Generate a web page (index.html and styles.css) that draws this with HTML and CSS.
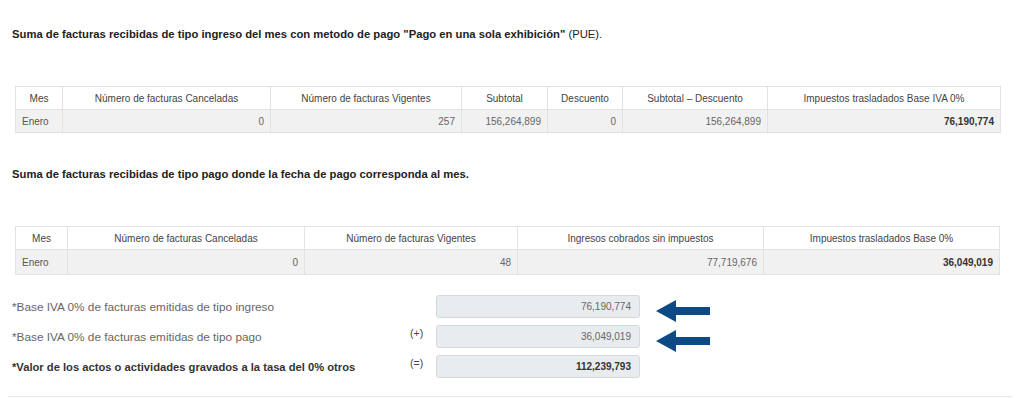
FILE: index.html
```html
<!DOCTYPE html>
<html lang="es">
<head>
<meta charset="utf-8">
<link rel="stylesheet" href="styles.css">
</head>
<body>
<div class="page">
  <p class="title t1">Suma de facturas recibidas de tipo ingreso del mes con metodo de pago "Pago en una sola exhibición" <span class="normal">(PUE).</span></p>
  <table class="grid g1">
    <colgroup>
      <col class="c1-mes"><col class="c1-can"><col class="c1-vig"><col class="c1-sub"><col class="c1-des"><col class="c1-sd"><col class="c1-imp">
    </colgroup>
    <thead>
      <tr><th>Mes</th><th>Número de facturas Canceladas</th><th>Número de facturas Vigentes</th><th>Subtotal</th><th>Descuento</th><th>Subtotal – Descuento</th><th>Impuestos trasladados Base IVA 0%</th></tr>
    </thead>
    <tbody>
      <tr><td class="left">Enero</td><td>0</td><td>257</td><td>156,264,899</td><td>0</td><td>156,264,899</td><td class="strong">76,190,774</td></tr>
    </tbody>
  </table>

  <p class="title t2">Suma de facturas recibidas de tipo pago donde la fecha de pago corresponda al mes.</p>
  <table class="grid g2">
    <colgroup>
      <col class="c2-mes"><col class="c2-can"><col class="c2-vig"><col class="c2-ing"><col class="c2-imp">
    </colgroup>
    <thead>
      <tr><th>Mes</th><th>Número de facturas Canceladas</th><th>Número de facturas Vigentes</th><th>Ingresos cobrados sin impuestos</th><th>Impuestos trasladados Base 0%</th></tr>
    </thead>
    <tbody>
      <tr><td class="left">Enero</td><td>0</td><td>48</td><td>77,719,676</td><td class="strong">36,049,019</td></tr>
    </tbody>
  </table>

  <div class="sums">
    <div class="row">
      <span class="label">*Base IVA 0% de facturas emitidas de tipo ingreso</span>
      <span class="sign"></span>
      <span class="field">76,190,774</span>
      <svg class="arrow" width="54" height="22" viewBox="0 0 54 22"><polygon points="0,11 20,0 20,7 54,7 54,15 20,15 20,22" fill="#0d4a85"/></svg>
    </div>
    <div class="row">
      <span class="label">*Base IVA 0% de facturas emitidas de tipo pago</span>
      <span class="sign">(+)</span>
      <span class="field">36,049,019</span>
      <svg class="arrow" width="54" height="22" viewBox="0 0 54 22"><polygon points="0,11 20,0 20,7 54,7 54,15 20,15 20,22" fill="#0d4a85"/></svg>
    </div>
    <div class="row">
      <span class="label bold">*Valor de los actos o actividades gravados a la tasa del 0% otros</span>
      <span class="sign">(=)</span>
      <span class="field bold">112,239,793</span>
    </div>
  </div>
  <div class="rule"></div>
</div>
</body>
</html>
```

FILE: styles.css
```css
html, body {
  margin: 0;
  padding: 0;
  background: #ffffff;
}
body {
  font-family: "Liberation Sans", Arial, sans-serif;
  color: #555;
  width: 1024px;
  height: 398px;
  overflow: hidden;
}
.page {
  padding: 0 0 0 12px;
}
.title {
  margin: 0;
  font-size: 11.25px;
  line-height: 14px;
  font-weight: bold;
  color: #222;
}
.title .normal {
  font-weight: normal;
}
.t1 {
  padding-top: 27px;
}
.t2 {
  margin-top: 34px;
}
.grid {
  border-collapse: collapse;
  table-layout: fixed;
  margin-left: 3px;
  font-size: 10px;
}
.g1 {
  margin-top: 45px;
  width: 985px;
}
.g2 {
  margin-top: 45px;
  width: 984px;
}
.grid th, .grid td {
  border: 1px solid #e2e2e2;
  padding: 0 6px;
  white-space: nowrap;
  overflow: hidden;
}
.grid th {
  height: 22px;
  font-weight: normal;
  color: #444;
  background: #fff;
  text-align: center;
}
.grid td {
  height: 22px;
  background: #f1f1f1;
  text-align: right;
  color: #666;
}
.g2 td {
  height: 24px;
}
.grid td.left {
  text-align: left;
  color: #555;
}
.grid td.strong {
  font-weight: bold;
  color: #333;
}
.c1-mes { width: 47px; }
.c1-can { width: 208px; }
.c1-vig { width: 191px; }
.c1-sub { width: 86px; }
.c1-des { width: 75px; }
.c1-sd { width: 145px; }
.c1-imp { width: 233px; }

.c2-mes { width: 52px; }
.c2-can { width: 237px; }
.c2-vig { width: 213px; }
.c2-ing { width: 246px; }
.c2-imp { width: 236px; }

.sums {
  margin-top: 20px;
  display: flex;
  flex-direction: column;
  gap: 7px;
}
.row {
  display: flex;
  align-items: flex-start;
  height: 23px;
}
.label {
  width: 398px;
  font-size: 11.8px;
  line-height: 14px;
  padding-top: 5px;
  color: #666;
}
.label.bold {
  font-size: 11.2px;
  font-weight: bold;
  color: #333;
}
.sign {
  width: 26px;
  font-size: 10.5px;
  color: #444;
  padding-top: 2px;
}
.field {
  box-sizing: border-box;
  width: 204px;
  height: 23px;
  background: #e9ecef;
  border: 1px solid #d6d9dc;
  border-radius: 3px;
  font-size: 10px;
  color: #666;
  text-align: right;
  padding: 0 8px;
  line-height: 21px;
}
.field.bold {
  font-weight: bold;
  color: #333;
}
.arrow {
  margin-left: 16px;
  margin-top: 5px;
  display: block;
}
.rule {
  margin-top: 18px;
  margin-left: -4px;
  width: 1004px;
  border-top: 1px solid #e4e6e8;
}
```
